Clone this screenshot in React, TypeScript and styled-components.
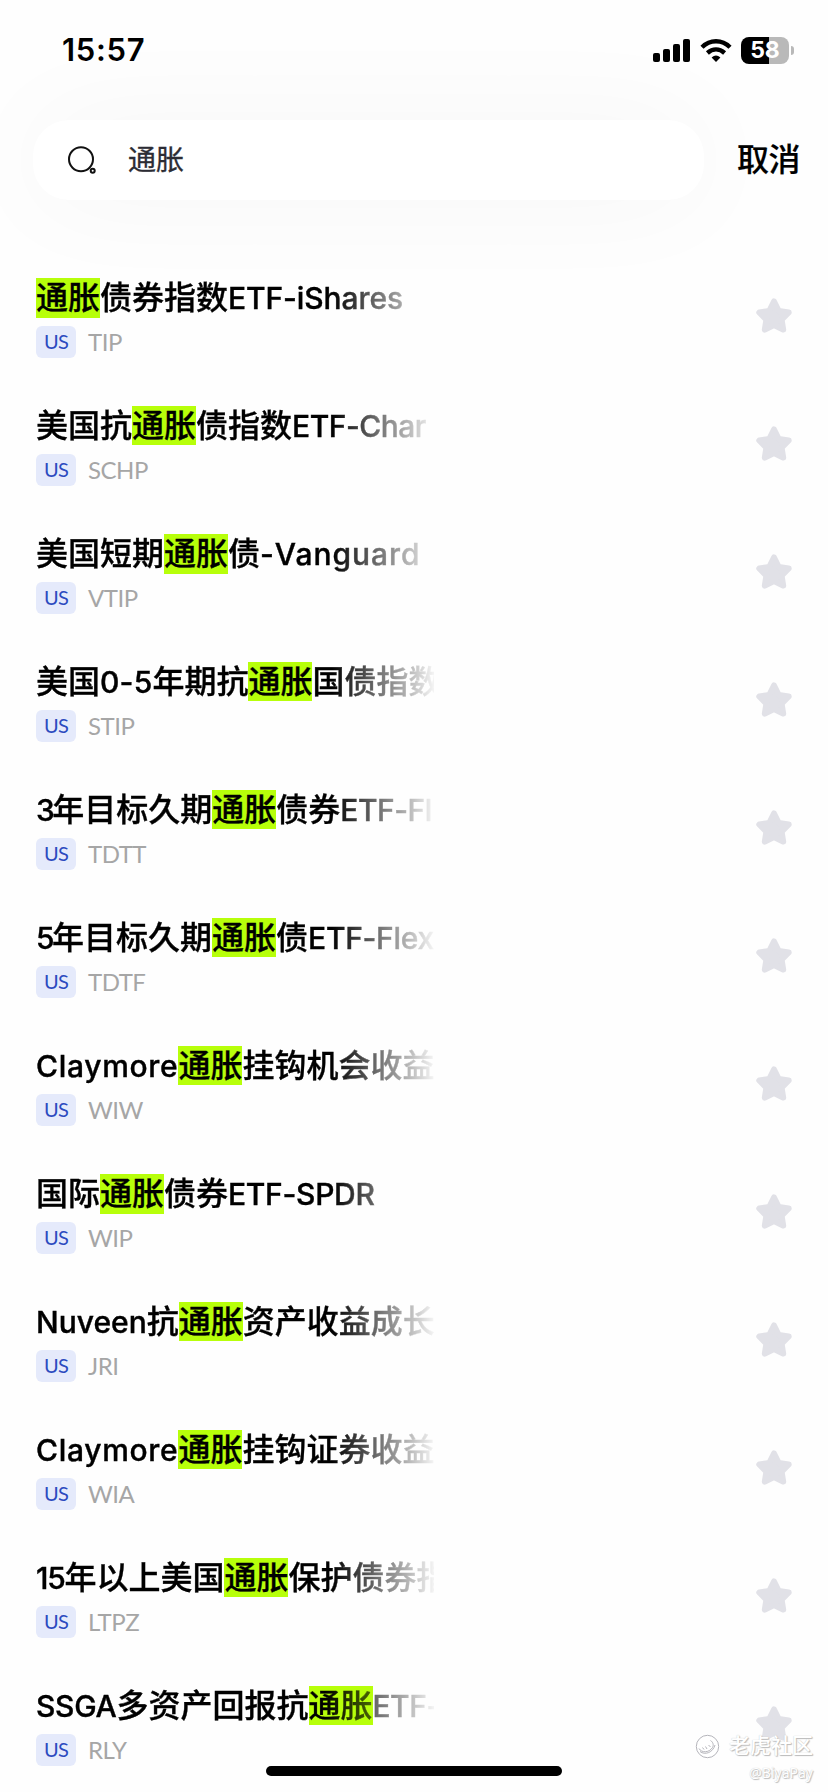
import React from "react";
import styled, { createGlobalStyle } from "styled-components";

const GlobalStyle = createGlobalStyle`
  * { box-sizing: border-box; }
  html, body { margin: 0; background: #fefefe; }
  body { font-family: Inter, "Noto Sans CJK SC", sans-serif; color: #000; }
`;

const Screen = styled.main`
  position: relative;
  width: 828px;
  height: 1792px;
  overflow: hidden;
  display: flex;
  flex-direction: column;
  background: #fefefe;
`;

const StatusBar = styled.header`
  position: relative;
  z-index: 1;
  height: 100px;
  padding: 0 34px 0 62px;
  display: flex;
  align-items: center;
  justify-content: space-between;
`;

const Clock = styled.time`
  font-size: 31px;
  font-weight: 600;
  line-height: 40px;
  letter-spacing: 0.7px;
`;

const StatusIcons = styled.div`
  display: flex;
  align-items: center;
`;

const SignalIcon = styled.svg`
  width: 38px;
  height: 24px;
  margin-right: 9px;
`;

const WifiIcon = styled.svg`
  width: 32px;
  height: 24px;
  margin-right: 9px;
`;

const Battery = styled.div`
  width: 48px;
  height: 27px;
  border-radius: 8px;
  background: linear-gradient(90deg, #000 28px, #b9b9b9 28px);
  color: #fff;
  font-size: 23px;
  font-weight: 700;
  line-height: 27px;
  text-align: center;
`;

const BatteryCap = styled.div`
  width: 3px;
  height: 9px;
  margin-left: 2px;
  border-radius: 0 4px 4px 0;
  background: #b9b9b9;
`;

const SearchHeader = styled.div`
  display: flex;
  align-items: center;
  height: 120px;
  padding-left: 33px;
`;

const SearchField = styled.div`
  display: flex;
  align-items: center;
  width: 671px;
  height: 80px;
  padding-left: 34px;
  border-radius: 36px;
  background: #fff;
  box-shadow: 0 0 110px rgba(0, 0, 0, 0.04);
`;

const SearchIcon = styled.svg`
  width: 32px;
  height: 32px;
`;

const Query = styled.span`
  margin-left: 29px;
  font-size: 28px;
  line-height: 40px;
  color: #2c2c34;
  -webkit-text-stroke: 0.3px currentColor;
`;

const Cancel = styled.button`
  margin-left: 33px;
  padding: 0;
  border: 0;
  background: none;
  color: #000;
  font: 500 32px/44px Inter, "Noto Sans CJK SC", sans-serif;
  letter-spacing: -0.5px;
  -webkit-text-stroke: 0.2px currentColor;
`;

const List = styled.ul`
  list-style: none;
  margin: 34px 0 0;
  padding: 0;
`;

const Row = styled.li`
  height: 128px;
  padding: 24px 34px 24px 36px;
  display: flex;
  justify-content: space-between;
`;

const Info = styled.div`
  display: flex;
  flex-direction: column;
  gap: 8px;
`;

const Title = styled.div`
  width: 398px;
  height: 40px;
  overflow: hidden;
  white-space: nowrap;
  font-size: 32px;
  font-weight: 500;
  line-height: 40px;
  color: transparent;
  -webkit-text-stroke: 0.35px transparent;
  background: linear-gradient(90deg, #000 296px, rgba(0, 0, 0, 0) 402px) text;
`;

const Mark = styled.mark<{ $tall?: boolean; $fading?: boolean }>`
  padding: ${(p) => (p.$tall ? "1px 0" : "0")};
  color: ${(p) => (p.$fading ? "transparent" : "#000")};
  -webkit-text-stroke: 0.3px ${(p) => (p.$fading ? "transparent" : "#000")};
  background: ${(p) =>
    p.$fading
      ? "linear-gradient(90deg, #000 16px, rgba(0, 0, 0, 0.6)) text, linear-gradient(#b7ff0a, #b7ff0a) border-box"
      : "#b7ff0a"};
`;

const Latin = styled.span<{ $tracking: number }>`
  font-size: 30px;
  letter-spacing: ${(p) => p.$tracking}px;
  -webkit-text-stroke-width: 0.4px;
`;

const Meta = styled.div`
  display: flex;
  align-items: center;
  gap: 12px;
`;

const Market = styled.span`
  width: 40px;
  height: 32px;
  border-radius: 6px;
  background: #e5eafb;
  color: #2c4abf;
  font: 400 20px/30px Lato, sans-serif;
  letter-spacing: -0.7px;
  text-align: center;
`;

const Ticker = styled.span`
  color: #a6a6a6;
  font: 400 24px/30px Lato, sans-serif;
  letter-spacing: -0.5px;
`;

const StarIcon = styled.svg`
  width: 40px;
  height: 40px;
  margin-top: 18px;
`;

const HomeIndicator = styled.div`
  position: absolute;
  left: 266px;
  bottom: 16px;
  width: 296px;
  height: 10px;
  border-radius: 5px;
  background: #000;
`;

const Watermark = styled.div`
  position: absolute;
  right: 15px;
  bottom: 6px;
  display: flex;
  flex-direction: column;
  align-items: flex-end;
  color: #fff;
  text-shadow: 0 0 1px #bbb, 1px 1px 1px #bbb;
`;

const Brand = styled.div`
  display: flex;
  align-items: center;
  gap: 9px;
  font-size: 21px;
  font-weight: 500;
  line-height: 28px;
`;

const BrandIcon = styled.svg`
  width: 25px;
  height: 25px;
`;

const Author = styled.div`
  font: 400 14px/26px "Noto Sans", sans-serif;
`;

type Part = string | { latin: string; tracking: number };
interface Result {
  before: Part[];
  after: Part[];
  ticker: string;
  tall?: boolean;
  fading?: boolean;
}

const en = (latin: string, tracking = 0): Part => ({ latin, tracking });

const results: Result[] = [
  { before: [], after: ["债券指数", en("ETF-iShares", -0.1)], ticker: "TIP", tall: true },
  { before: ["美国抗"], after: ["债指数", en("ETF-Char", -0.5)], ticker: "SCHP" },
  { before: ["美国短期"], after: ["债", en("-Vanguard", 0.95)], ticker: "VTIP", tall: true },
  { before: ["美国", en("0-5", 0.2), "年期抗"], after: ["国债指数"], ticker: "STIP" },
  { before: [en("3", -2.5), "年目标久期"], after: ["债券", en("ETF-Fl", -0.5)], ticker: "TDTT" },
  { before: [en("5", -2.5), "年目标久期"], after: ["债", en("ETF-Flex", -0.3)], ticker: "TDTF" },
  { before: [en("Claymore", 0.7)], after: ["挂钩机会收益"], ticker: "WIW" },
  { before: ["国际"], after: ["债券", en("ETF-SPDR", -0.3)], ticker: "WIP", tall: true },
  { before: [en("Nuveen"), "抗"], after: ["资产收益成长"], ticker: "JRI" },
  { before: [en("Claymore", 0.7)], after: ["挂钩证券收益"], ticker: "WIA" },
  { before: [en("15", -1.3), "年以上美国"], after: ["保护债券指"], ticker: "LTPZ" },
  { before: [en("SSGA", -0.3), "多资产回报抗"], after: [en("ETF-", -0.5)], ticker: "RLY", fading: true },
];

const renderPart = (part: Part, i: number) =>
  typeof part === "string" ? part : <Latin key={i} $tracking={part.tracking}>{part.latin}</Latin>;

function Star() {
  return (
    <StarIcon viewBox="0 0 40 40" fill="#e1e1e7" stroke="#e1e1e7" strokeWidth="6" strokeLinejoin="round">
      <path d="M20 5.5 24.7 15 34.7 16.5 27.6 23.6 29.2 33.6 20 29 10.8 33.6 12.4 23.6 5.3 16.5 15.3 15Z" />
    </StarIcon>
  );
}

export default function App() {
  return (
    <Screen>
      <GlobalStyle />
      <StatusBar>
        <Clock>15:57</Clock>
        <StatusIcons>
          <SignalIcon viewBox="0 0 38 24">
            <rect x="0" y="15" width="7" height="9" rx="2" />
            <rect x="10" y="11" width="7" height="13" rx="2" />
            <rect x="20" y="6" width="7" height="18" rx="2" />
            <rect x="30" y="1" width="7" height="23" rx="2" />
          </SignalIcon>
          <WifiIcon viewBox="0 0 32 24" fill="none" stroke="#000" strokeWidth="4.4">
            <path d="M2 9.2Q8 3.2 16 3.2T30 9.2" />
            <path d="M7.4 15Q11.4 11.4 16 11.4T24.6 15" />
            <path d="M16 24 11.6 19.4Q16 15.8 20.4 19.4Z" fill="#000" stroke="none" />
          </WifiIcon>
          <Battery>58</Battery>
          <BatteryCap />
        </StatusIcons>
      </StatusBar>
      <SearchHeader>
        <SearchField>
          <SearchIcon viewBox="0 0 32 32" fill="none" stroke="#111">
            <circle cx="14" cy="15.3" r="12" strokeWidth="2" />
            <circle cx="25.7" cy="26.7" r="2" strokeWidth="2" />
          </SearchIcon>
          <Query>通胀</Query>
        </SearchField>
        <Cancel>取消</Cancel>
      </SearchHeader>
      <List>
        {results.map((r) => (
          <Row key={r.ticker}>
            <Info>
              <Title>
                {r.before.map(renderPart)}
                <Mark $tall={r.tall} $fading={r.fading}>通胀</Mark>
                {r.after.map(renderPart)}
              </Title>
              <Meta>
                <Market>US</Market>
                <Ticker>{r.ticker}</Ticker>
              </Meta>
            </Info>
            <Star />
          </Row>
        ))}
      </List>
      <HomeIndicator />
      <Watermark>
        <Brand>
          <BrandIcon viewBox="0 0 25 25" fill="none" stroke="#b5b5bb" strokeWidth="1">
            <circle cx="12.5" cy="12.5" r="11.2" fill="#fff" />
            <path d="M4 14.5C6.500 19 14 19 17.500 13.500 19 11 18 8 15.500 6.500M5 17.500C10 21.500 18 18.500 20 11" />
            <path d="M7.500 13.500 9 15.500M10.500 12.500 12 15M13.500 11 15.500 13" />
          </BrandIcon>
          老虎社区
        </Brand>
        <Author>@BiyaPay</Author>
      </Watermark>
    </Screen>
  );
}
